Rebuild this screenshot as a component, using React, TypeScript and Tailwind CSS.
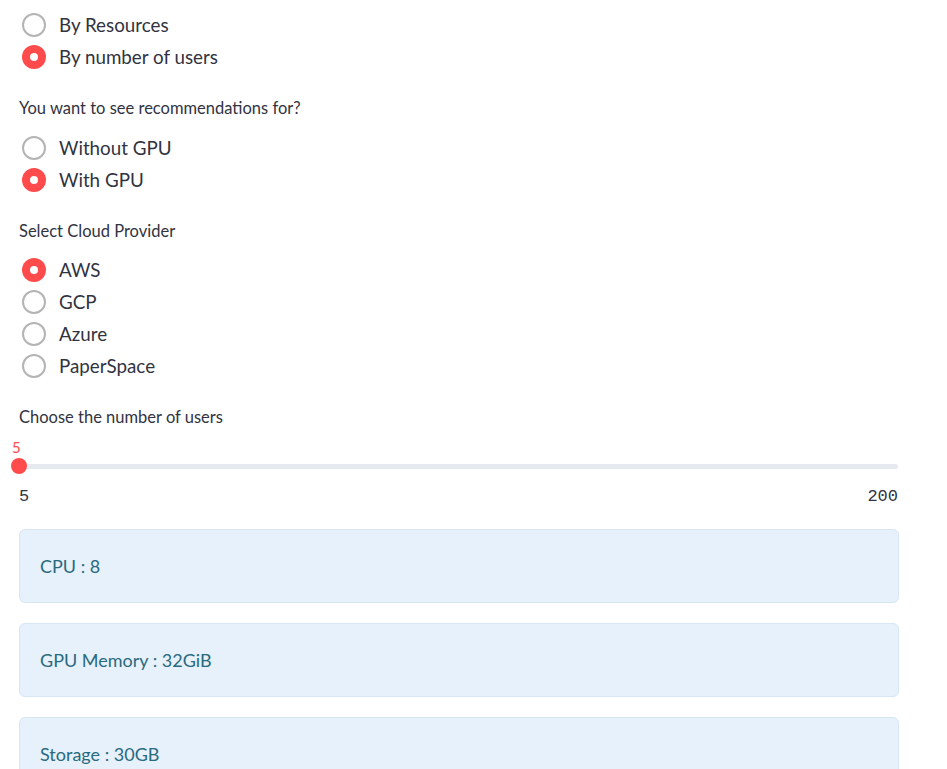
import React from "react"

type RadioProps = { label: string; checked?: boolean }

const Radio: React.FC<RadioProps> = ({ label, checked }) => (
    <div className="flex items-center h-8">
        <div className="w-[48px] flex justify-end pr-[2px]">
            {checked ? (
                <span className="w-[24px] h-[24px] rounded-full bg-[#ff4b4b] flex items-center justify-center">
                    <span className="w-[8px] h-[8px] rounded-full bg-white" />
                </span>
            ) : (
                <span className="w-[24px] h-[24px] rounded-full border-[2.5px] border-[#b4b4b4] bg-white" />
            )}
        </div>
        <span className="ml-[11px] text-[18.8px] leading-[24px] text-[#31333f]">{label}</span>
    </div>
)

const Label: React.FC<{ children: React.ReactNode }> = ({ children }) => (
    <p className="text-[16.5px] leading-[24px] text-[#31333f] pl-[19px]">{children}</p>
)

const InfoBox: React.FC<{ children: React.ReactNode }> = ({ children }) => (
    <div className="h-[74px] rounded-md bg-[#e6f1fc] border border-[#d6e6f5] flex items-center pl-[20px] text-[18px] text-[#2a6a7e]">
        {children}
    </div>
)

export default function App() {
    return (
        <div className="bg-white w-[947px] h-[769px] overflow-hidden" style={{ fontFamily: "Lato, 'Open Sans', sans-serif" }}>
            <div className="pt-[9px] flex flex-col">
                <Radio label="By Resources" />
                <Radio label="By number of users" checked />
            </div>

            <div className="mt-[23px]">
                <Label>You want to see recommendations for?</Label>
            </div>
            <div className="mt-[12px] flex flex-col">
                <Radio label="Without GPU" />
                <Radio label="With GPU" checked />
            </div>

            <div className="mt-[23px]">
                <Label>Select Cloud Provider</Label>
            </div>
            <div className="mt-[11px] flex flex-col">
                <Radio label="AWS" checked />
                <Radio label="GCP" />
                <Radio label="Azure" />
                <Radio label="PaperSpace" />
            </div>

            <div className="mt-[23px]">
                <Label>Choose the number of users</Label>
            </div>

            <div className="pl-[19px] pr-[49px]">
                <div className="relative h-[56px]">
                    <span className="absolute left-[-7px] top-[8px] text-[15px] leading-[20px] text-[#ff4b4b]">5</span>
                    <div className="absolute left-0 right-0 top-[35px] h-[5px] rounded bg-[#e6e9ef]" />
                    <span className="absolute left-[-8px] top-[29px] w-[16px] h-[16px] rounded-full bg-[#ff4b4b]" />
                </div>
                <div className="flex justify-between h-[24px] items-center text-[17px] text-[#31333f]" style={{ fontFamily: "'Liberation Mono', monospace" }}>
                    <span>5</span>
                    <span>200</span>
                </div>
            </div>

            <div className="mt-[20px] pl-[19px] pr-[48px] flex flex-col gap-[20px]">
                <InfoBox>CPU : 8</InfoBox>
                <InfoBox>GPU Memory : 32GiB</InfoBox>
                <InfoBox>Storage : 30GB</InfoBox>
            </div>
        </div>
    )
}
